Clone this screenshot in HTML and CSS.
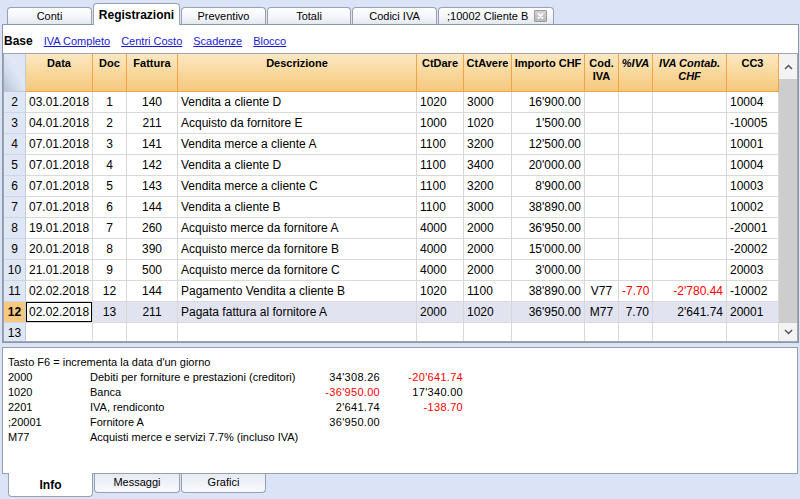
FILE: index.html
```html
<!DOCTYPE html>
<html lang="it">
<head>
<meta charset="utf-8">
<title>Registrazioni</title>
<link rel="stylesheet" href="styles.css">
</head>
<body>
<div class="tabs">
  <div class="tab t-conti">Conti</div>
  <div class="tab active t-reg">Registrazioni</div>
  <div class="tab t-prev">Preventivo</div>
  <div class="tab t-tot">Totali</div>
  <div class="tab t-iva">Codici IVA</div>
  <div class="tab t-cli">;10002 Cliente B
    <span class="close"><svg width="13" height="12" viewBox="0 0 13 12"><path d="M4 3.5 L9 8.5 M9 3.5 L4 8.5" stroke="#fff" stroke-width="1.8" stroke-linecap="round"/></svg></span>
  </div>
</div>

<div class="panel">
  <div class="views">
    <span class="cur">Base</span>
    <a href="#">IVA Completo</a>
    <a href="#">Centri Costo</a>
    <a href="#">Scadenze</a>
    <a href="#">Blocco</a>
  </div>
  <div class="grid">
    <div class="table">
      <div class="row head">
        <div class="c corner"></div>
        <div class="c">Data</div>
        <div class="c">Doc</div>
        <div class="c">Fattura</div>
        <div class="c">Descrizione</div>
        <div class="c">CtDare</div>
        <div class="c">CtAvere</div>
        <div class="c">Importo CHF</div>
        <div class="c">Cod.<br>IVA</div>
        <div class="c it">%IVA</div>
        <div class="c it">IVA Contab.<br>CHF</div>
        <div class="c">CC3</div>
      </div>
      <div class="row">
        <div class="c num">2</div><div class="c l">03.01.2018</div><div class="c m">1</div><div class="c m">140</div><div class="c l">Vendita a cliente D</div><div class="c l">1020</div><div class="c l">3000</div><div class="c r">16'900.00</div><div class="c m"></div><div class="c r"></div><div class="c r"></div><div class="c l">10004</div>
      </div>
      <div class="row">
        <div class="c num">3</div><div class="c l">04.01.2018</div><div class="c m">2</div><div class="c m">211</div><div class="c l">Acquisto da fornitore E</div><div class="c l">1000</div><div class="c l">1020</div><div class="c r">1'500.00</div><div class="c m"></div><div class="c r"></div><div class="c r"></div><div class="c l">-10005</div>
      </div>
      <div class="row">
        <div class="c num">4</div><div class="c l">07.01.2018</div><div class="c m">3</div><div class="c m">141</div><div class="c l">Vendita merce a cliente A</div><div class="c l">1100</div><div class="c l">3200</div><div class="c r">12'500.00</div><div class="c m"></div><div class="c r"></div><div class="c r"></div><div class="c l">10001</div>
      </div>
      <div class="row">
        <div class="c num">5</div><div class="c l">07.01.2018</div><div class="c m">4</div><div class="c m">142</div><div class="c l">Vendita a cliente D</div><div class="c l">1100</div><div class="c l">3400</div><div class="c r">20'000.00</div><div class="c m"></div><div class="c r"></div><div class="c r"></div><div class="c l">10004</div>
      </div>
      <div class="row">
        <div class="c num">6</div><div class="c l">07.01.2018</div><div class="c m">5</div><div class="c m">143</div><div class="c l">Vendita merce a cliente C</div><div class="c l">1100</div><div class="c l">3200</div><div class="c r">8'900.00</div><div class="c m"></div><div class="c r"></div><div class="c r"></div><div class="c l">10003</div>
      </div>
      <div class="row">
        <div class="c num">7</div><div class="c l">07.01.2018</div><div class="c m">6</div><div class="c m">144</div><div class="c l">Vendita a cliente B</div><div class="c l">1100</div><div class="c l">3000</div><div class="c r">38'890.00</div><div class="c m"></div><div class="c r"></div><div class="c r"></div><div class="c l">10002</div>
      </div>
      <div class="row">
        <div class="c num">8</div><div class="c l">19.01.2018</div><div class="c m">7</div><div class="c m">260</div><div class="c l">Acquisto merce da fornitore A</div><div class="c l">4000</div><div class="c l">2000</div><div class="c r">36'950.00</div><div class="c m"></div><div class="c r"></div><div class="c r"></div><div class="c l">-20001</div>
      </div>
      <div class="row">
        <div class="c num">9</div><div class="c l">20.01.2018</div><div class="c m">8</div><div class="c m">390</div><div class="c l">Acquisto merce da fornitore B</div><div class="c l">4000</div><div class="c l">2000</div><div class="c r">15'000.00</div><div class="c m"></div><div class="c r"></div><div class="c r"></div><div class="c l">-20002</div>
      </div>
      <div class="row">
        <div class="c num">10</div><div class="c l">21.01.2018</div><div class="c m">9</div><div class="c m">500</div><div class="c l">Acquisto merce da fornitore C</div><div class="c l">4000</div><div class="c l">2000</div><div class="c r">3'000.00</div><div class="c m"></div><div class="c r"></div><div class="c r"></div><div class="c l">20003</div>
      </div>
      <div class="row">
        <div class="c num">11</div><div class="c l">02.02.2018</div><div class="c m">12</div><div class="c m">144</div><div class="c l">Pagamento Vendita a cliente B</div><div class="c l">1020</div><div class="c l">1100</div><div class="c r">38'890.00</div><div class="c m">V77</div><div class="c r neg">-7.70</div><div class="c r neg">-2'780.44</div><div class="c l">-10002</div>
      </div>
      <div class="row sel">
        <div class="c num">12</div><div class="c l cur">02.02.2018</div><div class="c m">13</div><div class="c m">211</div><div class="c l">Pagata fattura al fornitore A</div><div class="c l">2000</div><div class="c l">1020</div><div class="c r">36'950.00</div><div class="c m">M77</div><div class="c r">7.70</div><div class="c r">2'641.74</div><div class="c l">20001</div>
      </div>
      <div class="row">
        <div class="c num">13</div><div class="c l"></div><div class="c m"></div><div class="c m"></div><div class="c l"></div><div class="c l"></div><div class="c l"></div><div class="c r"></div><div class="c m"></div><div class="c r"></div><div class="c r"></div><div class="c l"></div>
      </div>
    </div>
    <div class="scroll">
      <div class="sbtn up"><svg width="9" height="6" viewBox="0 0 9 6"><path d="M1 5 L4.5 1.5 L8 5" fill="none" stroke="#555" stroke-width="1.5"/></svg></div>
      <div class="thumb"></div>
      <div class="sbtn down"><svg width="9" height="6" viewBox="0 0 9 6"><path d="M1 1 L4.5 4.5 L8 1" fill="none" stroke="#555" stroke-width="1.5"/></svg></div>
    </div>
  </div>
</div>

<div class="info">
  <div class="line full">Tasto F6 = incrementa la data d'un giorno</div>
  <div class="line"><span>2000</span><span>Debiti per forniture e prestazioni (creditori)</span><span class="amt">34'308.26</span><span class="amt neg">-20'641.74</span></div>
  <div class="line"><span>1020</span><span>Banca</span><span class="amt neg">-36'950.00</span><span class="amt">17'340.00</span></div>
  <div class="line"><span>2201</span><span>IVA, rendiconto</span><span class="amt">2'641.74</span><span class="amt neg">-138.70</span></div>
  <div class="line"><span>;20001</span><span>Fornitore A</span><span class="amt">36'950.00</span><span class="amt"></span></div>
  <div class="line"><span>M77</span><span class="wide">Acquisti merce e servizi 7.7% (incluso IVA)</span></div>
</div>

<div class="btabs">
  <div class="btab active">Info</div>
  <div class="btab b-msg">Messaggi</div>
  <div class="btab b-gra">Grafici</div>
</div>
</body>
</html>
```

FILE: styles.css
```css
* { box-sizing: border-box; }
html, body { margin: 0; padding: 0; }
body {
  width: 800px;
  height: 499px;
  overflow: hidden;
  background: #dae4f6;
  font-family: "Liberation Sans", Arial, sans-serif;
  font-size: 11px;
  color: #000;
}

/* top tabs */
.tabs {
  height: 24px;
  display: flex;
  align-items: flex-end;
  padding-left: 7px;
}
.tab {
  height: 17px;
  margin-right: 1px;
  border: 1px solid #98a1b0;
  border-bottom: none;
  border-radius: 4px 4px 0 0;
  background: linear-gradient(#fefefe, #f4f6fa 55%, #e2e8f1);
  text-align: center;
  line-height: 16px;
  font-size: 11px;
  white-space: nowrap;
}
.tab.active {
  height: 22px;
  margin-bottom: -1px;
  position: relative;
  z-index: 2;
  background: #fff;
  font-weight: bold;
  font-size: 12px;
  line-height: 22px;
}
.t-conti { width: 85px; }
.t-reg { width: 87px; }
.t-prev { width: 85px; }
.t-tot { width: 84px; }
.t-iva { width: 85px; }
.t-cli {
  width: 116px;
  display: flex;
  align-items: center;
  padding-left: 8px;
  gap: 6px;
}
.close {
  display: flex;
  align-items: center;
  justify-content: center;
  width: 13px;
  height: 12px;
  margin-top: -1px;
  border: 1px solid #9a9a9a;
  background: linear-gradient(#d4d4d4, #b9b9b9);
  border-radius: 1px;
}
.close svg { display: block; }

/* main panel */
.panel {
  margin: 0 1px 0 2px;
  height: 319px;
  border: 1px solid #8d96a6;
  background: #fff;
  display: flex;
  flex-direction: column;
}
.views {
  height: 28px;
  padding: 10px 0 0 1px;
  display: flex;
  gap: 11px;
  line-height: 13px;
  font-size: 11px;
}
.views .cur { font-weight: bold; font-size: 12px; }
.views a { color: #1a1ad6; text-decoration: underline; }

.grid {
  height: 289px;
  border: 1px solid #a2a6ae;
  display: flex;
  overflow: hidden;
}
.table { width: 775px; }
.row {
  display: grid;
  grid-template-columns: 22px 67px 34px 51px 239px 47px 48px 73px 34px 34px 74px 52px;
  height: 21px;
  font-size: 12px;
}
.c {
  border-right: 1px solid #d9d9d9;
  border-bottom: 1px solid #d9d9d9;
  line-height: 20px;
  white-space: nowrap;
  overflow: hidden;
  padding: 0 3px;
}
.l { text-align: left; }
.m { text-align: center; padding: 0; }
.r { text-align: right; }
.neg { color: #ff0000; }

.num {
  background: #dfe7f6;
  text-align: center;
  padding: 0;
  border-right-color: #c4cbd8;
  border-bottom-color: #cfd6e3;
}

.row.head { height: 38px; }
.head .c {
  background: linear-gradient(#fce8c3, #f8d597 60%, #f6c77d);
  border-right-color: #f1a444;
  border-bottom-color: #f1a444;
  font-weight: bold;
  font-size: 11px;
  line-height: 13px;
  text-align: center;
  padding: 3px 0 0;
  white-space: normal;
}
.head .c.it { font-style: italic; }
.head .c.corner {
  background: linear-gradient(to top right, #b3bfd3 0%, #cfd9ea 30%, #dfe7f6 55%);
  border-right-color: #c4cbd8;
  border-bottom-color: #c4cbd8;
}

.row.sel .c { background: #e1e4f0; }
.row.sel .c.num { background: #f8c87e; font-weight: bold; }
.row.sel .c.cur { box-shadow: inset 0 0 0 1px #000; background: #fff; }

/* scrollbar */
.scroll {
  width: 18px;
  display: flex;
  flex-direction: column;
  background: #f0f0f0;
}
.sbtn {
  display: flex;
  align-items: center;
  justify-content: center;
  background: #f3f3f3;
}
.sbtn.up { height: 25px; }
.sbtn.down { height: 18px; }
.thumb { flex: 1; background: #cdcdcd; }

/* info panel */
.info {
  margin: 4px 2px 0 2px;
  height: 127px;
  border: 1px solid #98a0ae;
  background: #fff;
  padding: 7px 0 0 5px;
}
.line {
  display: grid;
  grid-template-columns: 82px 210px 80px 83px;
  height: 15px;
  line-height: 15px;
  white-space: nowrap;
}
.line.full { display: block; }
.line .amt { text-align: right; letter-spacing: 0.3px; }
.line .wide { grid-column: span 3; }

/* bottom tabs */
.btabs {
  display: flex;
  align-items: flex-start;
  padding-left: 8px;
}
.btab {
  height: 19px;
  border: 1px solid #98a0ae;
  border-top: none;
  border-radius: 0 0 4px 4px;
  background: linear-gradient(#e6ebf4, #f7f9fc);
  text-align: center;
  line-height: 17px;
  font-size: 11px;
  margin-right: 1px;
}
.btab.active {
  width: 85px;
  height: 24px;
  margin-top: -1px;
  position: relative;
  z-index: 2;
  background: #fff;
  font-weight: bold;
  font-size: 12px;
  line-height: 24px;
}
.b-msg { width: 86px; }
.b-gra { width: 85px; }
```
